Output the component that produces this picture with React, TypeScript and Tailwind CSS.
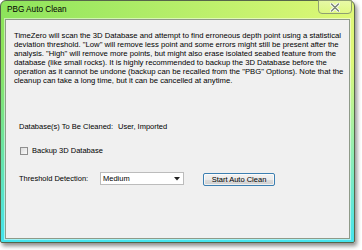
import React from 'react';

const lines = [
  'TimeZero will scan the 3D Database and attempt to find erroneous depth point using a statistical',
  'deviation threshold. "Low" will remove less point and some errors might still be present after the',
  'analysis. "High" will remove more points, but might also erase isolated seabed feature from the',
  'database (like small rocks). It is highly recommended to backup the 3D Database before the',
  'operation as it cannot be undone (backup can be recalled from the "PBG" Options). Note that the',
  'cleanup can take a long time, but it can be cancelled at anytime.',
];

function CloseGlyph() {
  return (
    <svg width="10" height="9" viewBox="0 0 10 9">
      <path d="M1.5 1 L8.5 8 M8.5 1 L1.5 8" stroke="#ffffff" strokeWidth="3.2" strokeLinecap="round" />
      <path d="M1.5 1 L8.5 8 M8.5 1 L1.5 8" stroke="#7d8a78" strokeWidth="1.6" strokeLinecap="round" />
    </svg>
  );
}

export default function App() {
  return (
    <div className="w-[362px] h-[250px] bg-white overflow-hidden font-['Liberation_Sans',Arial,sans-serif] text-black">
      <div className="relative w-[355px] h-[243px] rounded-t-[6px] rounded-b-[2px] border border-[#56664a] shadow-[2px_3px_4px_rgba(0,0,0,0.45)] bg-[linear-gradient(to_bottom,rgba(70,228,236,0)_25%,#44e4ee_100%),linear-gradient(to_right,#8de45c,#dff877)] flex flex-col">
        {/* Title bar */}
        <div className="h-[18px] shrink-0 flex items-center pl-[6px]">
          <span className="text-[8.2px] leading-none pt-[1px]">PBG Auto Clean</span>
        </div>
        <div className="absolute top-[-1px] right-[2px] w-[34px] h-[14px] rounded-b-[4px] border border-[#8f9f72] bg-[linear-gradient(to_bottom,rgba(255,255,255,0.35),rgba(255,255,255,0.1))] flex items-center justify-center">
          <CloseGlyph />
        </div>

        {/* Client area */}
        <div className="flex-1 mx-[4px] mb-[3px] border border-[#8e9a88] shadow-[0_0_0_1px_rgba(255,255,255,0.5)] bg-[#f0f0f0] flex flex-col">
          <div className="pl-[8px] pt-[11px] text-[7.7px] leading-[9px] whitespace-nowrap">
            {lines.map((l, i) => (
              <div key={i}>{l}</div>
            ))}
          </div>

          <div className="mt-[37px] ml-[13px] text-[7.5px] leading-[9px] flex">
            <span className="w-[99px]">Database(s) To Be Cleaned:</span>
            <span>User, Imported</span>
          </div>

          <div className="mt-[15px] ml-[14px] flex items-center gap-[4px] text-[7.5px] leading-[9px]">
            <div className="w-[8px] h-[8px] border border-[#8f8f8f] bg-[linear-gradient(135deg,#dcdcdc,#fafafa)]" />
            <span>Backup 3D Database</span>
          </div>

          <div className="mt-[16px] ml-[13px] flex items-center text-[7.5px] leading-[9px]">
            <span className="w-[81px]">Threshold Detection:</span>
            <div className="w-[84px] h-[13px] border border-[#bcbcbc] bg-white flex items-center justify-between pl-[2px] pr-[3px]">
              <span>Medium</span>
              <svg width="6" height="4" viewBox="0 0 6 4">
                <path d="M0 0 H6 L3 3.5 Z" fill="#222" />
              </svg>
            </div>
            <div className="ml-[19px] mt-[2px] w-[72px] h-[13px] rounded-[2px] border border-[#3c7fb1] bg-[linear-gradient(to_bottom,#f2f2f2_0%,#ebebeb_50%,#dddddd_51%,#cfcfcf_100%)] shadow-[inset_0_0_0_1px_rgba(255,255,255,0.7)] flex items-center justify-center">
              <span>Start Auto Clean</span>
            </div>
          </div>
        </div>
      </div>
    </div>
  );
}
